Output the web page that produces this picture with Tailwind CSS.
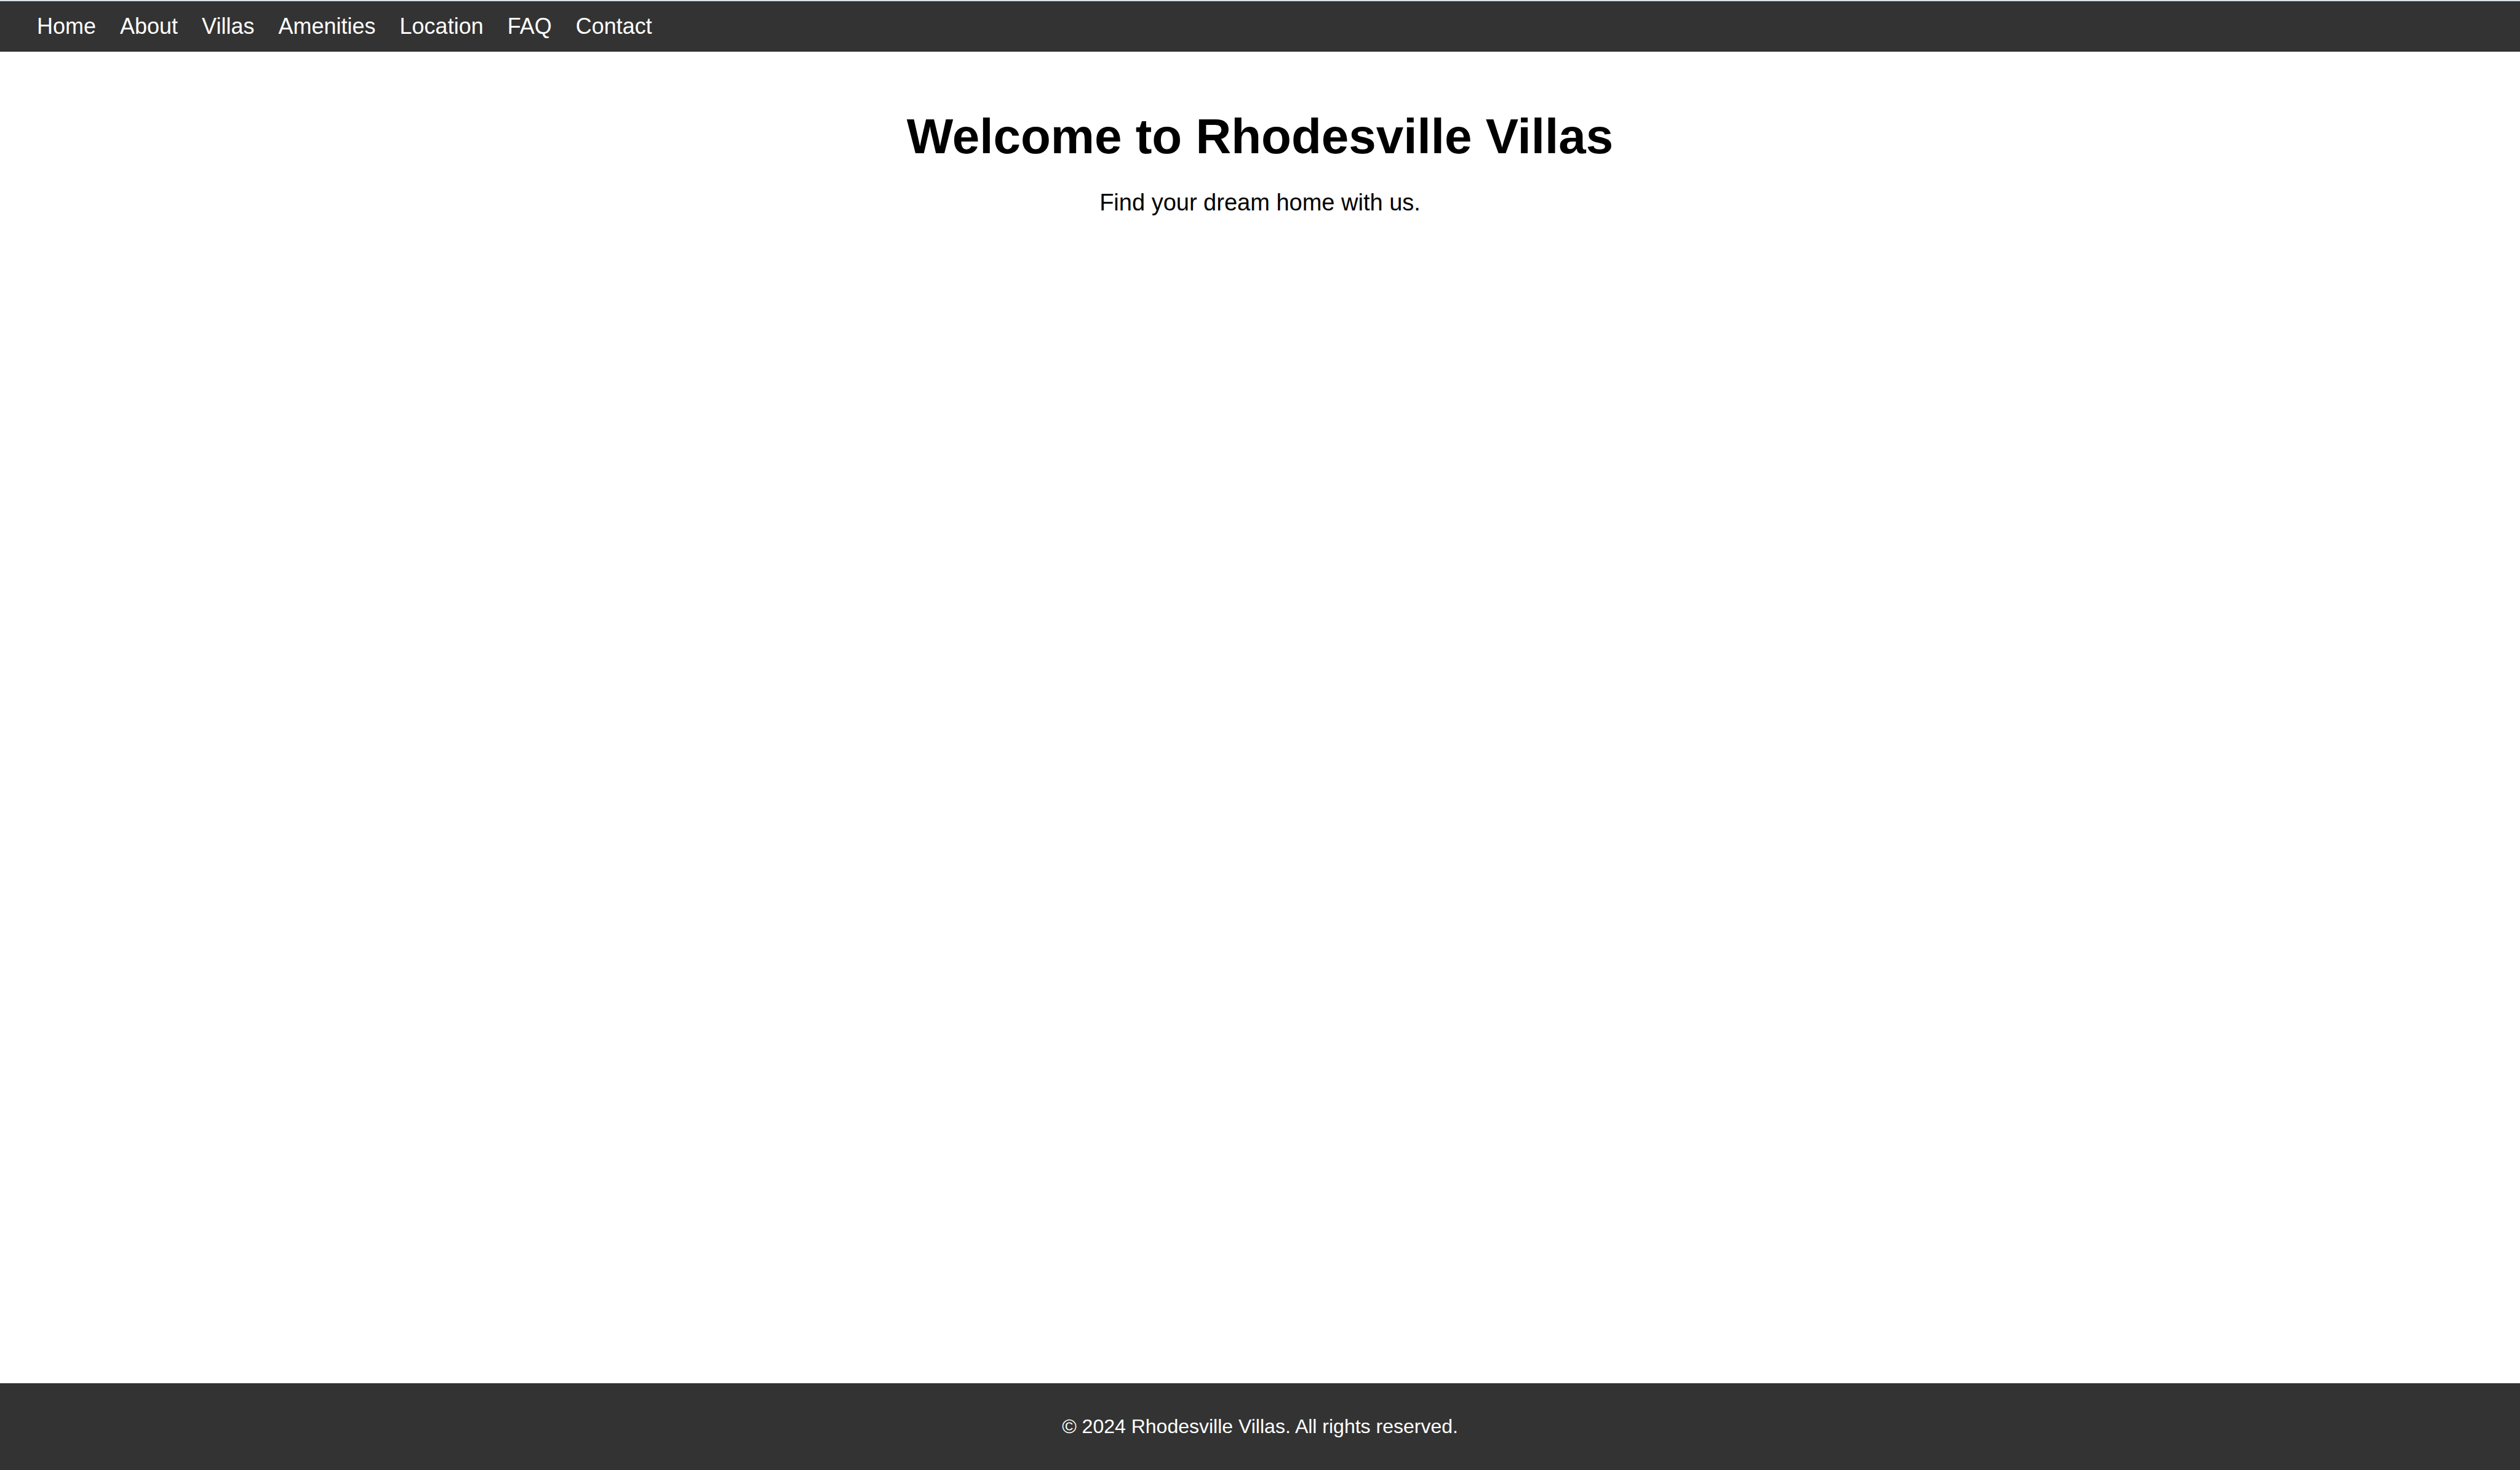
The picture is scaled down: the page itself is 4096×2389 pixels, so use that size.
<!DOCTYPE html>
<html lang="en">
<head>
<meta charset="utf-8">
<meta name="viewport" content="width=device-width, initial-scale=1">
<title>Rhodesville Villas</title>
<script src="https://cdn.jsdelivr.net/npm/@tailwindcss/browser@4"></script>
</head>
<body class="flex min-h-screen flex-col bg-white font-['Liberation_Sans',Arial,sans-serif] text-black">
  <header class="border-t-2 border-[#dbe1e9] bg-[#333333] px-[60px] py-5">
    <nav aria-label="Main">
      <ul class="flex flex-wrap gap-x-[39px] text-[36px] leading-[42px] text-white">
        <li><a href="#home">Home</a></li>
        <li><a href="#about">About</a></li>
        <li><a href="#villas">Villas</a></li>
        <li><a href="#amenities">Amenities</a></li>
        <li><a href="#location">Location</a></li>
        <li><a href="#faq">FAQ</a></li>
        <li><a href="#contact">Contact</a></li>
      </ul>
    </nav>
  </header>
  <main class="flex flex-1 flex-col gap-[39px] px-10 pt-[92px] text-center">
    <h1 class="text-[80px] leading-[92px] font-bold">Welcome to Rhodesville Villas</h1>
    <p class="text-[38px] leading-[44px]">Find your dream home with us.</p>
  </main>
  <footer class="bg-[#333333] px-10 py-[52px] text-center text-[32px] leading-[37px] text-white">
    <p>© 2024 Rhodesville Villas. All rights reserved.</p>
  </footer>
</body>
</html>
